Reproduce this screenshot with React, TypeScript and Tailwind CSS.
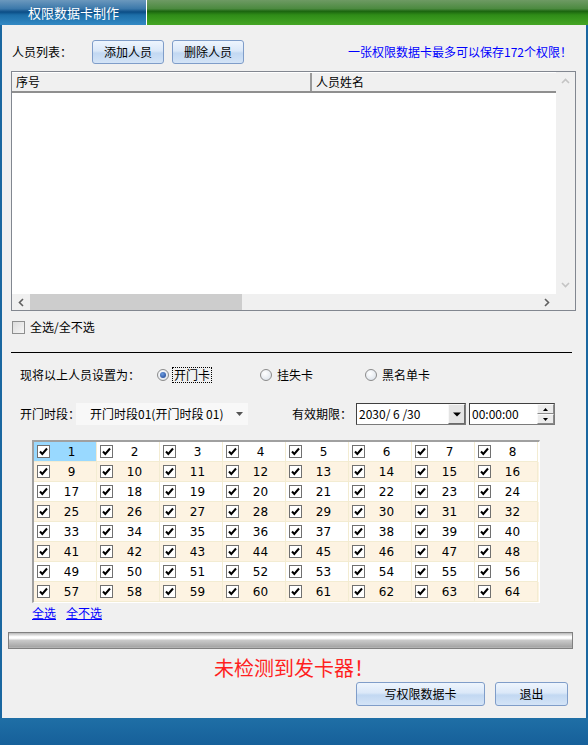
import React from 'react'

const Btn = ({ label, w }: { label: string; w: string }) => (
  <button
    className={`${w} h-[24px] shrink-0 rounded-[3px] border border-[#7f9dc9] bg-[linear-gradient(#eef5fd,#dbe8f8_45%,#c2d8f2_55%,#d4e4f7)] text-[12px] text-black leading-none`}
  >
    {label}
  </button>
)

const Check = ({ on }: { on: boolean }) => (
  <span className="w-[13px] h-[13px] border border-[#707070] bg-white flex items-center justify-center shrink-0">
    {on && (
      <svg width="11" height="11" viewBox="0 0 11 11">
        <path d="M2 5.5 L4.3 8 L9 2.5" stroke="#000" strokeWidth="2" fill="none" />
      </svg>
    )}
  </span>
)

const Radio = ({ on }: { on: boolean }) => (
  <span className="w-[12px] h-[12px] rounded-full border border-[#8b8b8b] bg-[radial-gradient(circle_at_40%_35%,#ffffff,#d6dde6)] flex items-center justify-center shrink-0">
    {on && <span className="w-[6px] h-[6px] rounded-full bg-[radial-gradient(circle_at_40%_35%,#6a9be0,#1c3f8c)]" />}
  </span>
)

export default function App() {
  const rows = Array.from({ length: 8 }, (_, r) => Array.from({ length: 8 }, (_, c) => r * 8 + c + 1))

  return (
    <div className="w-[588px] h-[745px] flex flex-col bg-[#1a67a0] font-['Noto_Sans_CJK_SC',sans-serif] text-[12px] text-black overflow-hidden whitespace-nowrap">
      {/* title bar */}
      <div className="h-[25px] flex shrink-0">
        <div className="w-[147px] border-r border-white bg-[linear-gradient(#6b98bd,#3b78aa_35%,#0b4d86_48%,#1d6ea8_60%,#3289c4)] flex items-center pl-[28px] text-white text-[13px]">
          权限数据卡制作
        </div>
        <div className="flex-1 bg-[linear-gradient(#6e9a64,#4c8a40_35%,#1b640f_45%,#2f8c18_60%,#45a624)]" />
      </div>

      {/* body */}
      <div className="h-[693px] mx-[2px] bg-[#f0f0f0] flex flex-col shrink-0">
        <div className="mt-[15px] h-[24px] flex items-center pl-[10px] pr-[14px]">
          <span className="w-[80px] shrink-0">人员列表：</span>
          <Btn label="添加人员" w="w-[72px]" />
          <span className="w-[8px] shrink-0" />
          <Btn label="删除人员" w="w-[72px]" />
          <span className="ml-auto text-[#0000ff]">一张权限数据卡最多可以保存172个权限！</span>
        </div>

        {/* list view */}
        <div className="mt-[7px] ml-[9px] w-[565px] h-[240px] border border-[#828790] bg-[#f0f0f0] flex flex-col">
          <div className="flex flex-1">
            <div className="flex-1 flex flex-col bg-white">
              <div className="h-[21px] flex bg-[#f0f0f0] border-b-2 border-[#8f8f8f] border-t border-t-white">
                <div className="w-[300px] pl-[4px] flex items-center border-r-2 border-r-[#9a9a9a]">序号</div>
                <div className="flex-1 pl-[4px] flex items-center">人员姓名</div>
              </div>
            </div>
            <div className="w-[19px] flex flex-col items-center justify-between py-[6px]">
              <svg width="9" height="6" viewBox="0 0 9 6"><path d="M1 5 L4.5 1.5 L8 5" stroke="#c4c4c4" strokeWidth="1.6" fill="none" /></svg>
              <svg width="9" height="6" viewBox="0 0 9 6"><path d="M1 1 L4.5 4.5 L8 1" stroke="#c4c4c4" strokeWidth="1.6" fill="none" /></svg>
            </div>
          </div>
          <div className="h-[16px] flex items-center">
            <div className="w-[18px] flex justify-center">
              <svg width="6" height="9" viewBox="0 0 6 9"><path d="M5 1 L1.5 4.5 L5 8" stroke="#606060" strokeWidth="1.6" fill="none" /></svg>
            </div>
            <div className="w-[212px] h-[16px] bg-[#cdcdcd]" />
            <div className="flex-1" />
            <div className="w-[18px] flex justify-center">
              <svg width="6" height="9" viewBox="0 0 6 9"><path d="M1 1 L4.5 4.5 L1 8" stroke="#606060" strokeWidth="1.6" fill="none" /></svg>
            </div>
            <div className="w-[19px]" />
          </div>
        </div>

        <div className="mt-[9px] h-[14px] pl-[10px] flex items-center gap-[5px]">
          <span className="w-[13px] h-[13px] border border-[#8e8f8f] bg-[linear-gradient(135deg,#dcdcdc,#f6f6f6)]" />
          <span>全选/全不选</span>
        </div>

        <div className="mt-[18px] ml-[9px] w-[561px] h-px bg-black" />

        {/* radios */}
        <div className="mt-[12px] h-[20px] pl-[18px] flex items-center">
          <span className="w-[137px] shrink-0">现将以上人员设置为：</span>
          <div className="w-[103px] shrink-0 flex items-center gap-[3px]">
            <Radio on />
            <span className="border border-dotted border-black px-px leading-[14px]">开门卡</span>
          </div>
          <div className="w-[105px] shrink-0 flex items-center gap-[5px]">
            <Radio on={false} />
            <span>挂失卡</span>
          </div>
          <div className="flex items-center gap-[5px]">
            <Radio on={false} />
            <span>黑名单卡</span>
          </div>
        </div>

        {/* time segment + expiry */}
        <div className="mt-[18px] h-[22px] pl-[18px] flex items-center">
          <span className="w-[56px] shrink-0">开门时段：</span>
          <div className="w-[172px] shrink-0 h-[22px] bg-[#f8f8f8] flex items-center pl-[14px] pr-[5px]">
            <span>开门时段01(开门时段 01)</span>
            <svg className="ml-auto" width="7" height="4" viewBox="0 0 7 4"><path d="M0 0 H7 L3.5 4 Z" fill="#555" /></svg>
          </div>
          <span className="ml-[44px] w-[64px] shrink-0">有效期限：</span>
          <div className="w-[110px] shrink-0 h-[22px] bg-white border border-[#7a7a7a] border-t-[#404040] border-l-[#404040] flex items-center">
            <span className="pl-[2px] flex-1 leading-none">2030/ 6 /30</span>
            <div className="w-[17px] h-[20px] bg-[#e4e4e4] border border-[#f8f8f8] border-r-[#6a6a6a] border-b-[#6a6a6a] flex items-center justify-center">
              <svg width="8" height="5" viewBox="0 0 8 5"><path d="M0 0.5 H8 L4 4.5 Z" fill="#000" /></svg>
            </div>
          </div>
          <div className="ml-[3px] w-[86px] shrink-0 h-[22px] bg-white border border-[#7a7a7a] border-t-[#404040] border-l-[#404040] flex items-center">
            <span className="pl-[2px] flex-1 leading-none">00:00:00</span>
            <div className="w-[17px] h-[20px] flex flex-col bg-white">
              <div className="flex-1 border border-[#fafafa] border-r-[#8a8a8a] border-b-[#8a8a8a] bg-[#ececec] flex items-center justify-center">
                <svg width="5" height="3" viewBox="0 0 5 3"><path d="M0 3 H5 L2.5 0 Z" fill="#000" /></svg>
              </div>
              <div className="flex-1 border border-[#fafafa] border-r-[#8a8a8a] border-b-[#8a8a8a] bg-[#ececec] flex items-center justify-center">
                <svg width="5" height="3" viewBox="0 0 5 3"><path d="M0 0 H5 L2.5 3 Z" fill="#000" /></svg>
              </div>
            </div>
          </div>
        </div>

        {/* permission grid */}
        <div className="mt-[15px] ml-[30px] w-[508px] h-[163px] border-2 border-[#a0a0a0] border-r-white border-b-white border-r border-b bg-[#f7f7f7]">
          {rows.map((row, r) => (
            <div key={r} className={`flex h-[20px] ${r % 2 === 1 ? 'bg-[#fdf3e2]' : 'bg-white'}`}>
              {row.map((n) => (
                <div
                  key={n}
                  className={`w-[63px] h-[20px] flex items-center pl-[3px] border-r border-b border-[#f3ecd2] ${n === 1 ? 'bg-[#99d9ff]' : ''}`}
                >
                  <Check on />
                  <span className="flex-1 text-center pr-[3px] font-['DejaVu_Sans',sans-serif] text-[12px] leading-none">{n}</span>
                </div>
              ))}
            </div>
          ))}
        </div>

        <div className="mt-[3px] h-[14px] pl-[30px] flex items-center gap-[10px] text-[#0000ff] underline">
          <span>全选</span>
          <span>全不选</span>
        </div>

        {/* progress bar */}
        <div className="mt-[12px] ml-[6px] w-[565px] h-[17px] border border-[#808080] bg-[linear-gradient(#b8b8b8,#ffffff_25%,#ffffff_35%,#c8c8c8_50%,#a8a8a8_90%,#b8b8b8)]" />

        <div className="mt-[9px] h-[20px] flex justify-center text-[20px] leading-[20px] text-[#ff1f1f]">
          未检测到发卡器！
        </div>

        <div className="mt-[4px] h-[24px] flex justify-end pr-[18px] gap-[10px]">
          <Btn label="写权限数据卡" w="w-[129px]" />
          <Btn label="退出" w="w-[73px]" />
        </div>
      </div>

      <div className="flex-1 bg-[linear-gradient(#1f6fa6,#16609a)]" />
    </div>
  )
}
